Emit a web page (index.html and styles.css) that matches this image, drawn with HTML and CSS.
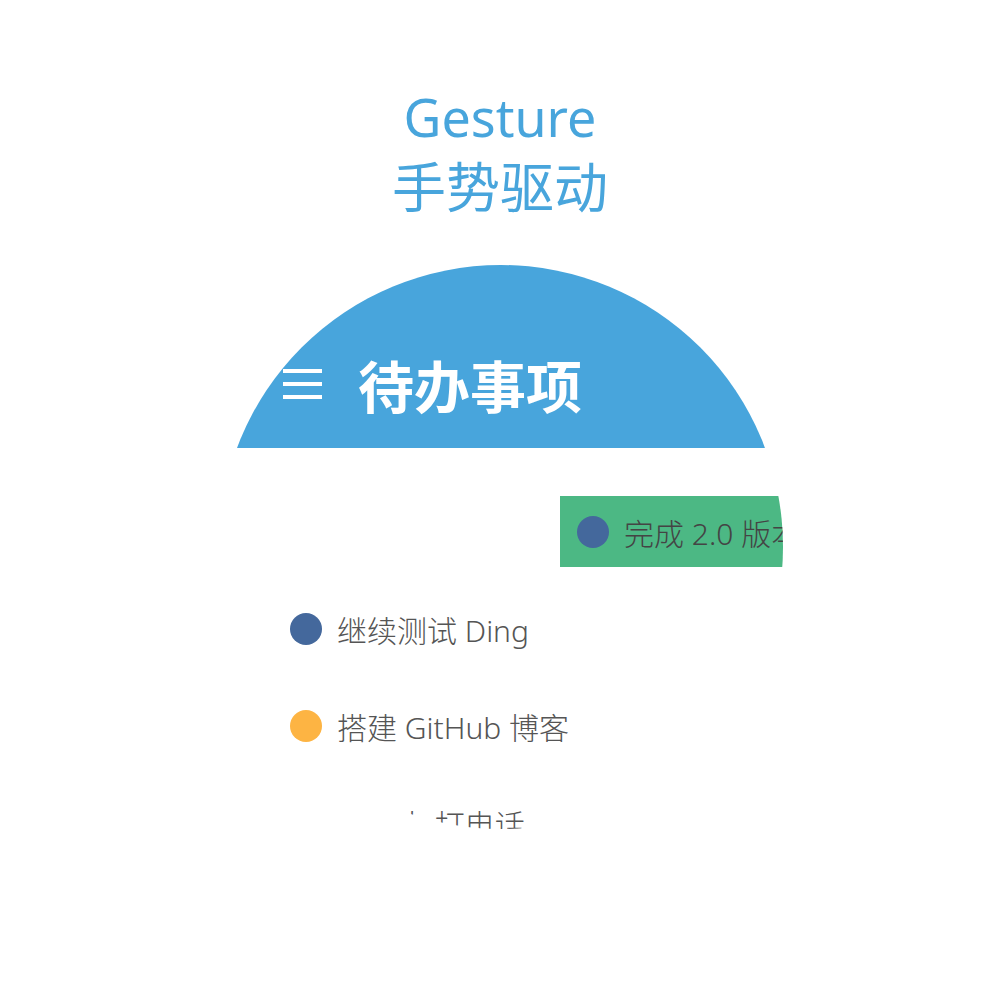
FILE: index.html
```html
<!DOCTYPE html>
<html lang="zh-CN">
<head>
<meta charset="utf-8">
<title>Gesture 手势驱动</title>
<link rel="stylesheet" href="styles.css">
</head>
<body>
<div class="intro">
  <div class="intro-en">Gesture</div>
  <div class="intro-zh">手势驱动</div>
</div>
<div class="watch">
  <header class="bar">
    <span class="menu"><i></i><i></i><i></i></span>
    <span class="bar-title">待办事项</span>
  </header>
  <ul class="list">
    <li class="item item-swiped"><span class="dot dot-blue"></span><span class="label">完成 2.0 版本发布</span></li>
    <li class="item"><span class="dot dot-blue"></span><span class="label">继续测试 Ding</span></li>
    <li class="item"><span class="dot dot-orange"></span><span class="label">搭建 GitHub 博客</span></li>
    <li class="item"><span class="dot dot-blue"></span><span class="label">给家人 打电话</span></li>
  </ul>
</div>
</body>
</html>
```

FILE: styles.css
```css
html, body {
  margin: 0;
  padding: 0;
  background: #ffffff;
}

body {
  width: 1000px;
  height: 1000px;
  overflow: hidden;
  font-family: "Noto Sans", "Noto Sans CJK SC", sans-serif;
}

.intro {
  padding-top: 91px;
  display: flex;
  flex-direction: column;
  align-items: center;
  color: #48a5dc;
}

.intro-en {
  font-family: "Noto Sans", sans-serif;
  font-size: 52px;
  line-height: 52px;
  height: 52px;
}

.intro-zh {
  font-family: "Noto Sans CJK SC", sans-serif;
  font-size: 54px;
  line-height: 54px;
  height: 54px;
  margin-top: 15px;
}

.watch {
  width: 564px;
  height: 564px;
  margin: 53px 0 0 219px;
  border-radius: 50%;
  overflow: hidden;
  background: #ffffff;
}

.bar {
  height: 183px;
  box-sizing: border-box;
  padding: 89px 0 0 64px;
  background: #48a5dc;
  display: flex;
  align-items: flex-start;
}

.menu {
  width: 39px;
  height: 60px;
  display: flex;
  flex-direction: column;
  justify-content: center;
  gap: 9px;
  margin-right: 36px;
}

.menu i {
  display: block;
  height: 4px;
  background: #ffffff;
}

.bar-title {
  font-family: "Noto Sans CJK SC", sans-serif;
  font-weight: 700;
  font-size: 56px;
  line-height: 60px;
  color: #ffffff;
  white-space: nowrap;
}

.list {
  list-style: none;
  margin: 48px 0 0 54px;
  padding: 0;
  display: flex;
  flex-direction: column;
  gap: 26px;
}

.item {
  width: 500px;
  height: 71px;
  box-sizing: border-box;
  padding-left: 17px;
  display: flex;
  align-items: center;
  gap: 15px;
  color: #555555;
  font-family: "Noto Sans", "Noto Sans CJK SC", sans-serif;
  font-weight: 300;
  font-size: 30px;
  white-space: nowrap;
}

.item-swiped {
  background: #4cb884;
  color: #444444;
  transform: translateX(287px);
}

.dot {
  flex: none;
  width: 32px;
  height: 32px;
  border-radius: 50%;
}

.dot-blue {
  background: #44689c;
}

.dot-orange {
  background: #fdb443;
}
```
